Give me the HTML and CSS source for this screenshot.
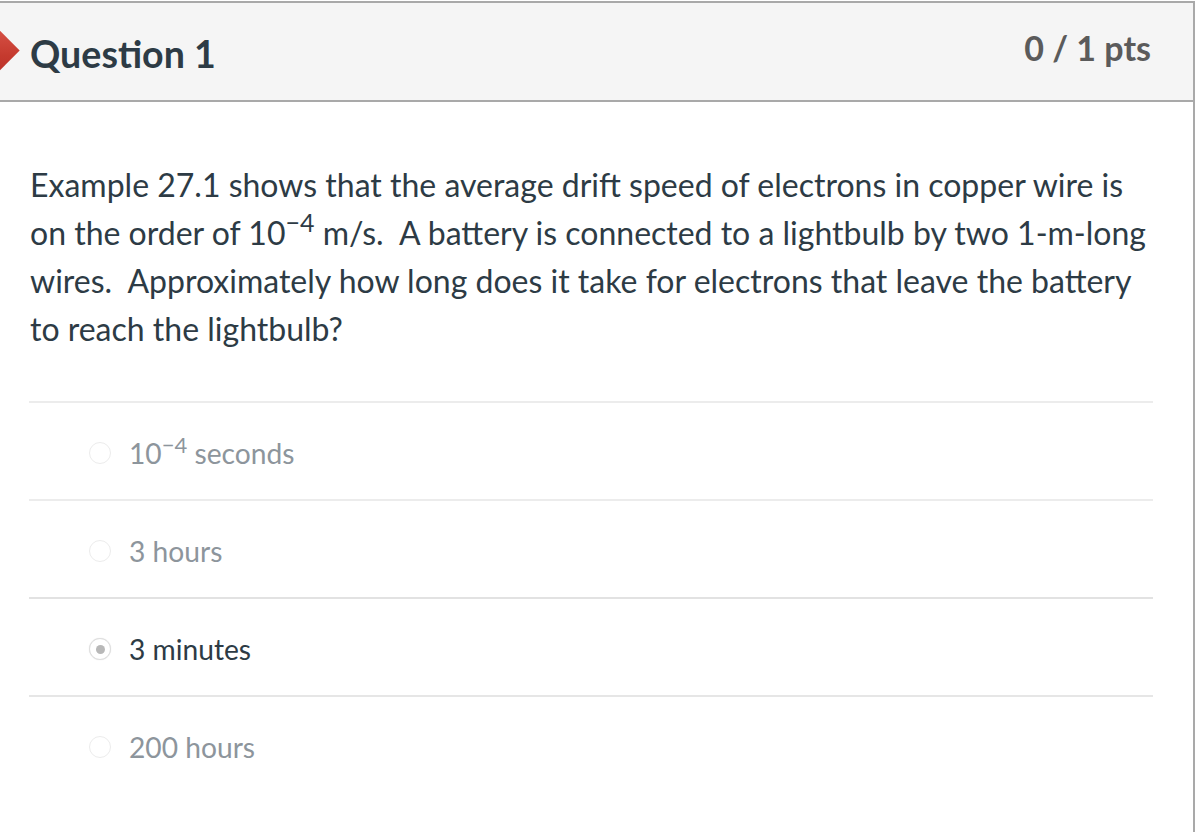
FILE: index.html
```html
<!DOCTYPE html>
<html lang="en">
<head>
<meta charset="utf-8">
<title>Question 1</title>
<link rel="stylesheet" href="styles.css">
</head>
<body>
<div class="question">
  <div class="q-header">
    <span class="arrow"></span>
    <h2 class="q-title">Question 1</h2>
    <div class="q-pts">0 / 1 pts</div>
  </div>
  <div class="q-body">
    <p class="q-text">Example 27.1 shows that the average drift speed of electrons in copper wire is on the order of 10<sup>−4</sup> m/s.&nbsp; A battery is connected to a lightbulb by two 1-m-long wires.&nbsp; Approximately how long does it take for electrons that leave the battery to reach the lightbulb?</p>
    <div class="answers">
      <div class="answer">
        <span class="radio"></span>
        <span class="a-text">10<sup>−4</sup> seconds</span>
      </div>
      <div class="answer">
        <span class="radio"></span>
        <span class="a-text">3 hours</span>
      </div>
      <div class="answer selected">
        <span class="radio checked"></span>
        <span class="a-text">3 minutes</span>
      </div>
      <div class="answer">
        <span class="radio"></span>
        <span class="a-text">200 hours</span>
      </div>
    </div>
  </div>
</div>
</body>
</html>
```
FILE: styles.css
```css
html, body {
  margin: 0;
  padding: 0;
  background: #fff;
}
body {
  font-family: Lato, "Open Sans", sans-serif;
  color: #2d3b45;
  overflow: hidden;
  height: 832px;
}
.question {
  margin-top: 1px;
  width: 1195px;
  height: 831px;
  border-top: 2px solid #a9a9a9;
  border-right: 2px solid #a9a9a9;
  box-sizing: border-box;
}
.q-header {
  position: relative;
  height: 99px;
  box-sizing: border-box;
  background: #f5f5f5;
  border-bottom: 2px solid #a9a9a9;
  display: flex;
  align-items: center;
  justify-content: space-between;
  padding: 0 42px 0 30px;
}
.arrow {
  position: absolute;
  left: -25px;
  top: 29px;
  width: 37px;
  height: 37px;
  transform: rotate(45deg);
  background: linear-gradient(135deg, #d9554a 0%, #c53a2e 60%, #b8302a 100%);
}
.q-title {
  margin: 4px 0 0 0;
  font-size: 37.6px;
  font-weight: 700;
  color: #2d3b45;
}
.q-pts {
  margin-top: -9px;
  font-size: 34px;
  font-weight: 700;
  color: #5b5b5b;
}
.q-body {
  padding: 59px 40px 0 29px;
}
.q-text {
  margin: 0 0 48px 1px;
  font-size: 32px;
  line-height: 48px;
}
.q-text sup, .a-text sup {
  font-size: 0.78em;
  line-height: 0;
  vertical-align: 0.52em;
}
.answers {
  display: flex;
  flex-direction: column;
}
.answer {
  height: 98px;
  box-sizing: border-box;
  border-top: 2px solid #ececec;
  display: flex;
  align-items: center;
  padding-left: 60px;
  padding-top: 4px;
}
.answer.selected {
  border-top-color: #e2e2e2;
}
.answer + .answer.selected + .answer {
  border-top-color: #e6e6e6;
}
.radio {
  width: 22px;
  height: 22px;
  border-radius: 50%;
  border: 1px solid #ececec;
  box-sizing: border-box;
  background: #fff;
  margin-right: 18px;
  display: flex;
  align-items: center;
  justify-content: center;
}
.radio.checked {
  border-color: #dedede;
  box-shadow: 0 0 1px #ddd;
}
.radio.checked::after {
  content: "";
  width: 9px;
  height: 9px;
  border-radius: 50%;
  background: #b8b8b8;
}
.a-text {
  font-size: 28.2px;
  color: #8d959c;
}
.answer.selected .a-text {
  color: #2d3b45;
}
```
